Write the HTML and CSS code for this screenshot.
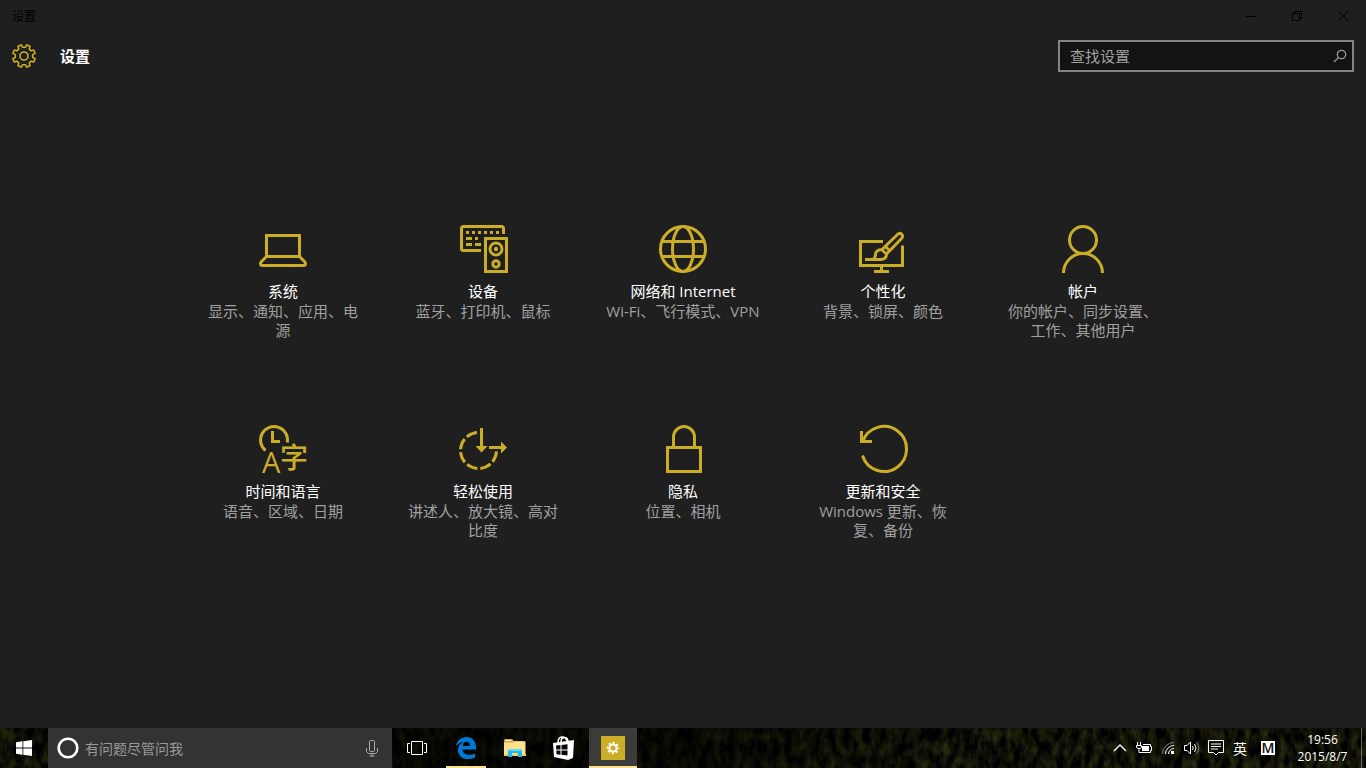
FILE: index.html
```
<!DOCTYPE html>
<html lang="zh-CN">
<head>
<meta charset="utf-8">
<title>设置</title>
<meta name="viewport" content="width=device-width, initial-scale=1">
<link rel="stylesheet" href="styles.css">
</head>
<body>
<div class="window">
  <div class="titlebar">
    <span class="titlebar-name">设置</span>
    <div class="window-controls">
      <button type="button" aria-label="最小化"><svg width="12" height="12" viewBox="0 0 12 12"><path d="M1 6.5h10"/></svg></button>
      <button type="button" aria-label="还原"><svg width="12" height="12" viewBox="0 0 12 12"><path d="M1.5 3.500h7v7h-7zM3.500 3.500v-2h7v7h-2"/></svg></button>
      <button type="button" aria-label="关闭"><svg width="12" height="12" viewBox="0 0 12 12"><path d="M1 1l10 10M11 1L1 11"/></svg></button>
    </div>
  </div>

  <header class="header">
    <svg class="gear" width="24" height="24" viewBox="0 0 24 24"><path d="M13.380 3.310L14.660.92 17.960 2.280 17.170 4.880 19.120 6.830 21.720 6.040 23.080 9.340 20.690 10.620V13.380L23.080 14.660 21.720 17.960 19.120 17.170 17.170 19.120 17.960 21.720 14.660 23.080 13.380 20.690H10.620L9.340 23.080 6.040 21.720 6.830 19.120 4.880 17.170 2.280 17.960.92 14.660 3.310 13.380V10.620L.92 9.340 2.280 6.040 4.880 6.830 6.830 4.880 6.040 2.280 9.340.92 10.620 3.310z"/><circle cx="12" cy="12" r="4"/></svg>
    <h1>设置</h1>
    <form class="search" role="search">
      <input type="search" aria-label="查找设置" placeholder="查找设置">
      <button type="button" aria-label="搜索"><svg width="14" height="14" viewBox="0 0 14 14"><circle cx="8.500" cy="5.500" r="4.200"/><path d="M5.500 8.500L1 13"/></svg></button>
    </form>
  </header>

  <main class="tiles">
    <a class="tile" href="#system">
      <svg class="icon" viewBox="0 0 48 48"><path d="M7.500 10.500h33v21h-33zM7.500 31.500l-5 5q-1 1-1 2 0 2 2 2h41q2 0 2-2 0-1-1-2l-5-5"/></svg>
      <h2>系统</h2><p>显示、通知、应用、电源</p>
    </a>
    <a class="tile" href="#devices">
      <svg class="icon" viewBox="-1 0 48 48"><path d="M21 25.500H3.500q-2 0-2-2v-20q0-2 2-2h38q2 0 2 2V9M25.500 13.500h21v33h-21z"/><path d="M6 7.500h33" stroke-dasharray="3 3"/><path d="M6 13.500h6m3 0h3M6 19.500h6m3 0h6"/><circle cx="36" cy="24" r="6"/><circle class="solid" cx="36" cy="24" r="2.200"/><circle cx="36" cy="39" r="3.200"/></svg>
      <h2>设备</h2><p>蓝牙、打印机、鼠标</p>
    </a>
    <a class="tile" href="#network">
      <svg class="icon" viewBox="0 0 48 48"><circle cx="24" cy="24" r="22.500"/><ellipse cx="24" cy="24" rx="10.500" ry="22.500"/><path d="M3 16.500h42M3 31.500h42"/></svg>
      <h2>网络和 Internet</h2><p>Wi-Fi、飞行模式、VPN</p>
    </a>
    <a class="tile" href="#personalization">
      <svg class="icon" viewBox="0 0 48 48"><path d="M24 16.500H1.500v24h42V20.500M22.500 41v5M15 46.500h15"/><path d="M6 34.500h15.500c4.500 0 6-2 6-5.500l15-15.500c3-3-1-7-4-4L23 24.500c-4 0-6.500 2-6.500 5 0 2-.5 3.500-2.500 5M22.500 24.500l5.500 5M26 21l5 5"/></svg>
      <h2>个性化</h2><p>背景、锁屏、颜色</p>
    </a>
    <a class="tile" href="#accounts">
      <svg class="icon" viewBox="0 0 48 48"><circle cx="24" cy="15" r="13.500"/><path d="M4.500 48a19.500 19.500 0 0 1 39 0"/></svg>
      <h2>帐户</h2><p>你的帐户、同步设置、工作、其他用户</p>
    </a>
    <a class="tile" href="#time-language">
      <svg class="icon" viewBox="0 0 48 48"><path d="M6.500 25.500A13.500 13.500 0 1 1 28.300 17.500M13.500 6v10.500H21"/><text x="3" y="48" class="letter">A</text><text x="21" y="43" class="hanzi">字</text></svg>
      <h2>时间和语言</h2><p>语音、区域、日期</p>
    </a>
    <a class="tile" href="#ease-of-access">
      <svg class="icon" viewBox="0 0 48 48"><path d="M19.500 7.500A18 18 0 1 0 37.500 25.500" stroke-dasharray="11.140 3" stroke-dashoffset="-1.500"/><path d="M22.500 3v19M30 22.500h13"/><path class="solid" d="M16.500 21h12l-6 6.500zM42 16.500v12l6-6z"/></svg>
      <h2>轻松使用</h2><p>讲述人、放大镜、高对比度</p>
    </a>
    <a class="tile" href="#privacy">
      <svg class="icon" viewBox="-1 0 48 48"><path d="M7.500 22.500h33v24h-33zM13.500 22V12a10.500 10.500 0 0 1 21 0v10"/></svg>
      <h2>隐私</h2><p>位置、相机</p>
    </a>
    <a class="tile" href="#update">
      <svg class="icon" viewBox="-1 0 48 48"><path d="M2.800 16.500A22.500 22.500 0 1 1 2.500 30.500M1.500 6v10.500H12"/></svg>
      <h2>更新和安全</h2><p>Windows 更新、恢复、备份</p>
    </a>
  </main>
</div>

<footer class="taskbar">
  <svg class="wallpaper" aria-hidden="true">
    <defs>
      <filter id="grass" x="0" y="0" width="100%" height="100%" color-interpolation-filters="sRGB">
        <feTurbulence type="fractalNoise" baseFrequency=".14 .07" numOctaves="4" seed="8"/>
        <feColorMatrix values=".3 .08 0 0 -.13  .36 0 0 0 -.115  .1 0 .06 0 -.055  0 0 0 0 1"/>
      </filter>
      <linearGradient id="shade"><stop offset="0" stop-opacity=".1"/><stop offset=".28" stop-opacity=".6"/><stop offset=".48" stop-opacity=".6"/><stop offset=".7" stop-opacity=".1"/><stop offset="1" stop-opacity="0"/></linearGradient>
    </defs>
    <rect width="100%" height="100%" filter="url(#grass)"/>
    <rect width="100%" height="100%" fill="url(#shade)"/>
  </svg>

  <button class="task" type="button" aria-label="开始"><svg width="16" height="16" viewBox="0 0 16 16" fill="#fff"><path d="M0 2.200L6.500 1.300v6.200H0zM7.300 1.200L16 0v7.500H7.300zM0 8.400h6.500v6.300L0 13.800zM7.300 8.400H16V16l-8.700-1.200z"/></svg></button>
  <form class="cortana">
    <svg width="22" height="22" viewBox="0 0 22 22"><circle cx="11" cy="11" r="9.300" fill="none" stroke="#fff" stroke-width="2.600"/></svg>
    <input type="text" aria-label="有问题尽管问我" placeholder="有问题尽管问我">
    <button type="button" aria-label="语音"><svg width="12" height="17" viewBox="0 0 12 17" fill="none" stroke="#aaa"><rect x="3.500" y=".5" width="5" height="11" rx="1"/><path d="M.5 8v3.500l2 2h7l2-2V8M6 13.500v3M3.500 16h5"/></svg></button>
  </form>
  <nav class="apps">
    <button class="task" type="button" aria-label="任务视图"><svg width="20" height="14" viewBox="0 0 20 14" fill="none" stroke="#fff"><path d="M4.500.5h11v13h-11zM3 2.500H.5v9H3M17 2.500h2.500v9H17"/></svg></button>
    <button class="task running" type="button" aria-label="Edge"><svg width="20" height="22" viewBox="0 0 20 22"><path fill="#0078d7" d="M0 9.500C1 3.500 5 0 10.500 0 17 0 20 5 20 10v2.500H6.500c.2 3.800 3.500 5.300 6.500 5.300 2.500 0 4.500-.7 6-1.600v4.300c-2 1-4.500 1.500-7 1.500C6 22 2 18.500 2 13.200 2 9.500 4 6.500 7.500 5 4.500 5 1.500 7 0 9.500zM6.700 9h7.300c0-3-1.300-4.300-3.500-4.300C8.500 4.700 7 6.500 6.700 9z"/></svg></button>
    <button class="task" type="button" aria-label="文件资源管理器"><svg width="22" height="18" viewBox="0 0 22 18"><path fill="#dca43b" d="M0 1.500Q0 0 1 0h7l2 2h10.500v14H0z"/><path fill="#fff" d="M2 1h5v1H2z"/><path fill="#fee18a" d="M0 3.500h9l1-1h11.500V17H0z"/><path fill="#f5cd64" d="M0 15h22v2H0z"/><path fill="#19b8ef" d="M4 10h14v8h-4v-4H8v4H4z"/><path fill="#64d8fb" d="M4 10h14v2H4z"/></svg></button>
    <button class="task" type="button" aria-label="应用商店"><svg width="22" height="24" viewBox="0 0 22 24"><path fill="none" stroke="#fff" stroke-width="1.500" d="M5 7C5 2 7 1 9 1s4 1 5 4M8 6c0-3 1.500-4.500 3.500-4.500S15 3 15 6"/><path fill="#fff" d="M0 7l21-3-1 18-5 2L1 21z"/><path fill="#080808" d="M3 9.500l4.500-.5v4.500H3.200zM8.500 8.900l6-.7v5.300h-6zM3.300 14.500h4.200v4.200l-4-.5zM8.500 14.500h6v5l-6-.7z"/></svg></button>
    <button class="task running active" type="button" aria-label="设置"><svg width="24" height="24" viewBox="0 0 24 24"><path fill="#ccad27" d="M0 0h24v24H0z"/><g fill="none" stroke="#fff" stroke-width="2"><circle cx="12" cy="12" r="3.600"/><circle cx="12" cy="12" r="5.200" stroke-dasharray="2.040 2.044" stroke-dashoffset="1.020"/></g></svg></button>
  </nav>

  <div class="tray">
    <button type="button" aria-label="显示隐藏的图标"><svg width="14" height="8" viewBox="0 0 14 8"><path d="M1 7l6-6 6 6" stroke-width="1.300"/></svg></button>
    <button type="button" aria-label="电池"><svg width="16" height="12" viewBox="0 0 16 12"><path d="M1.500 0v3M4.500 0v3M.5 3.500h5v2l-1.500 1H2l-1.500-1zM3 7v3.500h11.500v-2h1v-4h-1v-2H7"/><path fill="#fff" stroke="none" d="M6 4h7v5H6z"/></svg></button>
    <button type="button" aria-label="无线网络"><svg width="12" height="12" viewBox="0 0 12 12"><path stroke="#888" d="M.5 12A11.500 11.500 0 0 1 12 .5"/><path d="M3.500 12A8.500 8.500 0 0 1 12 3.500M6.500 12A5.500 5.500 0 0 1 12 6.500"/><path fill="#fff" stroke="none" d="M9 9h3v3H9z"/></svg></button>
    <button type="button" aria-label="音量"><svg width="16" height="14" viewBox="0 0 16 14"><path d="M.5 4.500H3L6.500 1v12L3 9.500H.5zM8.500 5q1.500 2 0 4M10.500 3q3 4 0 8"/><path stroke="#888" d="M12.500 1.500q4.500 5.500 0 11"/></svg></button>
    <button type="button" aria-label="操作中心"><svg width="16" height="16" viewBox="0 0 16 16"><path d="M.5.5h15v12h-5L8 15l-2.500-2.500h-5zM3 4h10M3 6.500h10M3 9h7"/></svg></button>
    <button type="button">英</button>
    <button class="ime" type="button" aria-label="M"><span>M</span></button>
    <button class="clock" type="button"><time datetime="2015-08-07T19:56">19:56<br>2015/8/7</time></button>
    <button class="show-desktop" type="button" aria-label="显示桌面"></button>
  </div>
</footer>
</body>
</html>
```
FILE: styles.css
```
* { box-sizing: border-box; }

body {
  margin: 0;
  min-height: 100vh;
  display: flex;
  flex-direction: column;
  background: #1f1f1f;
  color: #fff;
  font: 15px/19px "Open Sans", "Noto Sans CJK SC", sans-serif;
}

button, input {
  margin: 0;
  padding: 0;
  border: 0;
  border-radius: 0;
  background: none;
  color: inherit;
  font: inherit;
}

svg { flex: none; }

.window { flex: 1; display: flex; flex-direction: column; }

.titlebar {
  display: flex;
  align-items: center;
  justify-content: space-between;
  height: 32px;
  padding-left: 12px;
  color: #000;
  font-size: 12px;
}
.window-controls { display: flex; }
.window-controls button {
  display: grid;
  place-items: center;
  width: 46px;
  height: 32px;
}
.window-controls svg { fill: none; stroke: #000; }

.header {
  display: flex;
  align-items: center;
  height: 48px;
  padding: 0 12px;
}
.gear { fill: none; stroke: #ccad27; stroke-width: 1.600; stroke-linejoin: round; }
.header h1 { margin: 0 auto 0 24px; font-size: 15px; font-weight: 700; }

.search {
  display: flex;
  align-items: center;
  width: 296px;
  height: 32px;
  padding: 0 5px 0 10px;
  border: 2px solid #858585;
  background: #131313;
}
.search input { flex: 1; min-width: 0; outline: 0; appearance: none; }
.search input::placeholder { color: #a0a0a0; opacity: 1; }
.search button { display: grid; }
.search svg { fill: none; stroke: #999; stroke-width: 1.300; }

.tiles {
  display: grid;
  grid-template-columns: repeat(auto-fill, 200px);
  grid-auto-rows: 200px;
  width: 100%;
  max-width: 1000px;
  margin: 0 auto;
  padding-top: 145px;
}
.tile {
  padding: 0 22px;
  color: inherit;
  text-align: center;
  text-decoration: none;
}
.icon {
  display: block;
  width: 48px;
  height: 48px;
  margin: 0 auto 8px;
  overflow: visible;
  fill: none;
  stroke: #ccad27;
  stroke-width: 3;
}
.icon .solid, .icon text { fill: #ccad27; stroke: none; }
.letter { font-size: 29px; font-weight: 500; }
.hanzi { font-size: 28px; font-weight: 500; }
.tile h2 { margin: 0 0 1px; font-size: 15px; font-weight: 400; line-height: 20px; }
.tile p { margin: 0; color: #a0a0a0; }

.taskbar {
  position: relative;
  display: flex;
  height: 40px;
  background: #050603;
}
.wallpaper { position: absolute; inset: 0; width: 100%; height: 100%; }
.taskbar > :not(.wallpaper) { position: relative; }

.task {
  display: grid;
  place-items: center;
  width: 48px;
  height: 40px;
}
.cortana {
  display: flex;
  align-items: center;
  gap: 6px;
  width: 344px;
  padding: 0 14px 0 9px;
  background: #333;
  font-size: 14px;
}
.cortana input { flex: 1; min-width: 0; outline: 0; }
.cortana input::placeholder { color: #999; opacity: 1; }
.cortana button { display: grid; }

.apps { display: flex; gap: 1px; padding-left: 1px; }
.running { background: linear-gradient(#fbe08f, #fbe08f) center bottom / 40px 2px no-repeat; }
.active { background-color: #3b3b39; background-size: 100% 2px; }

.tray {
  display: flex;
  margin-left: auto;
  font-size: 14px;
}
.tray button {
  display: grid;
  place-items: center;
  width: 24px;
  height: 40px;
}
.tray svg { fill: none; stroke: #fff; }
.tray .ime { width: 32px; }
.ime span {
  width: 14px;
  height: 14px;
  background: #fff;
  color: #111;
  font-weight: 600;
  line-height: 14px;
  text-align: center;
}
.tray .clock { width: 77px; font-size: 12px; line-height: 17px; }
.tray .show-desktop { width: 5px; border-left: 1px solid #666; }
```
